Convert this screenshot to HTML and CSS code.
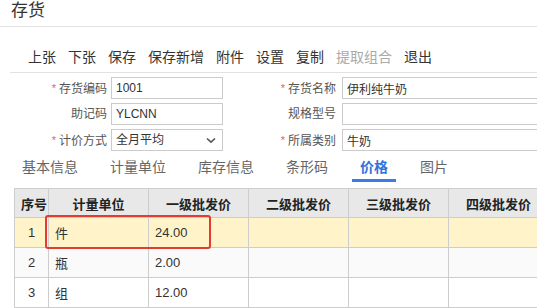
FILE: index.html
```html
<!DOCTYPE html>
<html lang="zh-CN">
<head>
    <meta charset="UTF-8">
    <title>存货</title>
    <link rel="stylesheet" href="styles.css">
</head>
<body>
    <div class="page-title">存货</div>

    <div class="toolbar">
        <span class="tool">上张</span>
        <span class="tool">下张</span>
        <span class="tool">保存</span>
        <span class="tool">保存新增</span>
        <span class="tool">附件</span>
        <span class="tool">设置</span>
        <span class="tool">复制</span>
        <span class="tool disabled">提取组合</span>
        <span class="tool">退出</span>
    </div>

    <div class="form">
        <label class="field-label"><span class="req">*</span>存货编码</label>
        <input class="field" type="text" value="1001" readonly>
        <label class="field-label wide"><span class="req">*</span>存货名称</label>
        <input class="field" type="text" value="伊利纯牛奶" readonly>

        <label class="field-label">助记码</label>
        <input class="field" type="text" value="YLCNN" readonly>
        <label class="field-label wide">规格型号</label>
        <input class="field" type="text" value="" readonly>

        <label class="field-label"><span class="req">*</span>计价方式</label>
        <div class="field select">
            <span>全月平均</span>
            <svg width="10" height="7" viewBox="0 0 10 7"><path d="M1 1.5 L5 5.2 L9 1.5" fill="none" stroke="#555" stroke-width="1.6"/></svg>
        </div>
        <label class="field-label wide"><span class="req">*</span>所属类别</label>
        <input class="field" type="text" value="牛奶" readonly>
    </div>

    <div class="tabs">
        <span class="tab">基本信息</span>
        <span class="tab">计量单位</span>
        <span class="tab">库存信息</span>
        <span class="tab">条形码</span>
        <span class="tab active">价格</span>
        <span class="tab">图片</span>
    </div>

    <div class="grid-wrap">
        <table class="price-grid">
            <colgroup>
                <col style="width:34px">
                <col style="width:100px">
                <col style="width:100px">
                <col style="width:100px">
                <col style="width:100px">
                <col style="width:100px">
            </colgroup>
            <thead>
                <tr>
                    <th>序号</th>
                    <th>计量单位</th>
                    <th>一级批发价</th>
                    <th>二级批发价</th>
                    <th>三级批发价</th>
                    <th>四级批发价</th>
                </tr>
            </thead>
            <tbody>
                <tr class="current">
                    <td class="num">1</td>
                    <td>件</td>
                    <td>24.00</td>
                    <td></td><td></td><td></td>
                </tr>
                <tr class="alt">
                    <td class="num">2</td>
                    <td>瓶</td>
                    <td>2.00</td>
                    <td></td><td></td><td></td>
                </tr>
                <tr>
                    <td class="num">3</td>
                    <td>组</td>
                    <td>12.00</td>
                    <td></td><td></td><td></td>
                </tr>
            </tbody>
        </table>
        <div class="highlight"></div>
    </div>
</body>
</html>
```

FILE: styles.css
```css
body {
    margin: 0;
    width: 537px;
    height: 308px;
    overflow: hidden;
    font-family: "Liberation Sans", "Noto Sans CJK SC", sans-serif;
    color: #333;
    background: #fff;
}

.page-title {
    height: 26px;
    line-height: 21px;
    padding-left: 11px;
    font-size: 17px;
    color: #333;
    border-bottom: 1px solid #e2e2e2;
}

.toolbar {
    margin-left: 10px;
    padding: 20px 0 5px 18px;
    display: flex;
    gap: 12px;
    font-size: 14px;
    line-height: 20px;
    border-bottom: 1px solid #e2e2e2;
}

.tool {
    color: #333;
    white-space: nowrap;
}

.tool.disabled {
    color: #aaa;
}

.form {
    width: 620px;
    margin-top: 4px;
    display: grid;
    grid-template-columns: 111px 112px 119px 1fr;
    grid-auto-rows: 22px;
    row-gap: 4px;
    font-size: 12px;
}

.field-label {
    text-align: right;
    padding-right: 4px;
    line-height: 22px;
    color: #555;
}

.field-label.wide {
    padding-right: 6px;
}

.req {
    color: #e46262;
    font-size: 11px;
    margin-right: 3px;
    vertical-align: 1px;
}

.field {
    box-sizing: border-box;
    height: 22px;
    margin: 0;
    padding: 0 4px;
    border: 1px solid #cbcbcb;
    border-radius: 0;
    font-family: "Liberation Sans", "Noto Sans CJK SC", sans-serif;
    font-size: 12px;
    color: #333;
    background: #fff;
    outline: none;
}

.select {
    display: flex;
    align-items: center;
    justify-content: space-between;
    padding: 0 6px 0 4px;
    line-height: 20px;
}

.tabs {
    margin-top: 6px;
    padding-left: 6px;
    display: flex;
    font-size: 14px;
    line-height: 20px;
}

.tab {
    margin: 0 8px;
    padding: 0 8px 2px;
    border-bottom: 3px solid transparent;
    color: #666;
    white-space: nowrap;
}

.tab.active {
    color: #2f74dc;
    font-weight: bold;
    border-bottom-color: #3a7ee3;
}

.grid-wrap {
    position: relative;
    margin: 6px 0 0 14px;
}

.price-grid {
    border-collapse: collapse;
    table-layout: fixed;
    width: 534px;
    font-size: 13px;
}

.price-grid th,
.price-grid td {
    border: 1px solid #cdcdcd;
    padding: 0 6px;
    white-space: nowrap;
    overflow: hidden;
}

.price-grid th {
    height: 28px;
    background: #e8e8e8;
    color: #222;
    font-weight: bold;
    text-align: center;
}

.price-grid td {
    height: 29px;
    color: #333;
}

.price-grid td.num {
    text-align: center;
    padding: 0;
}

.price-grid tr.current td {
    background: #fff4c9;
}

.price-grid tr.alt td {
    background: #fafafa;
}

/* red marker drawn over the first row */
.highlight {
    position: absolute;
    left: 31px;
    top: 27px;
    width: 162px;
    height: 30px;
    border: 2px solid #e33a33;
    border-radius: 3px;
}
```
